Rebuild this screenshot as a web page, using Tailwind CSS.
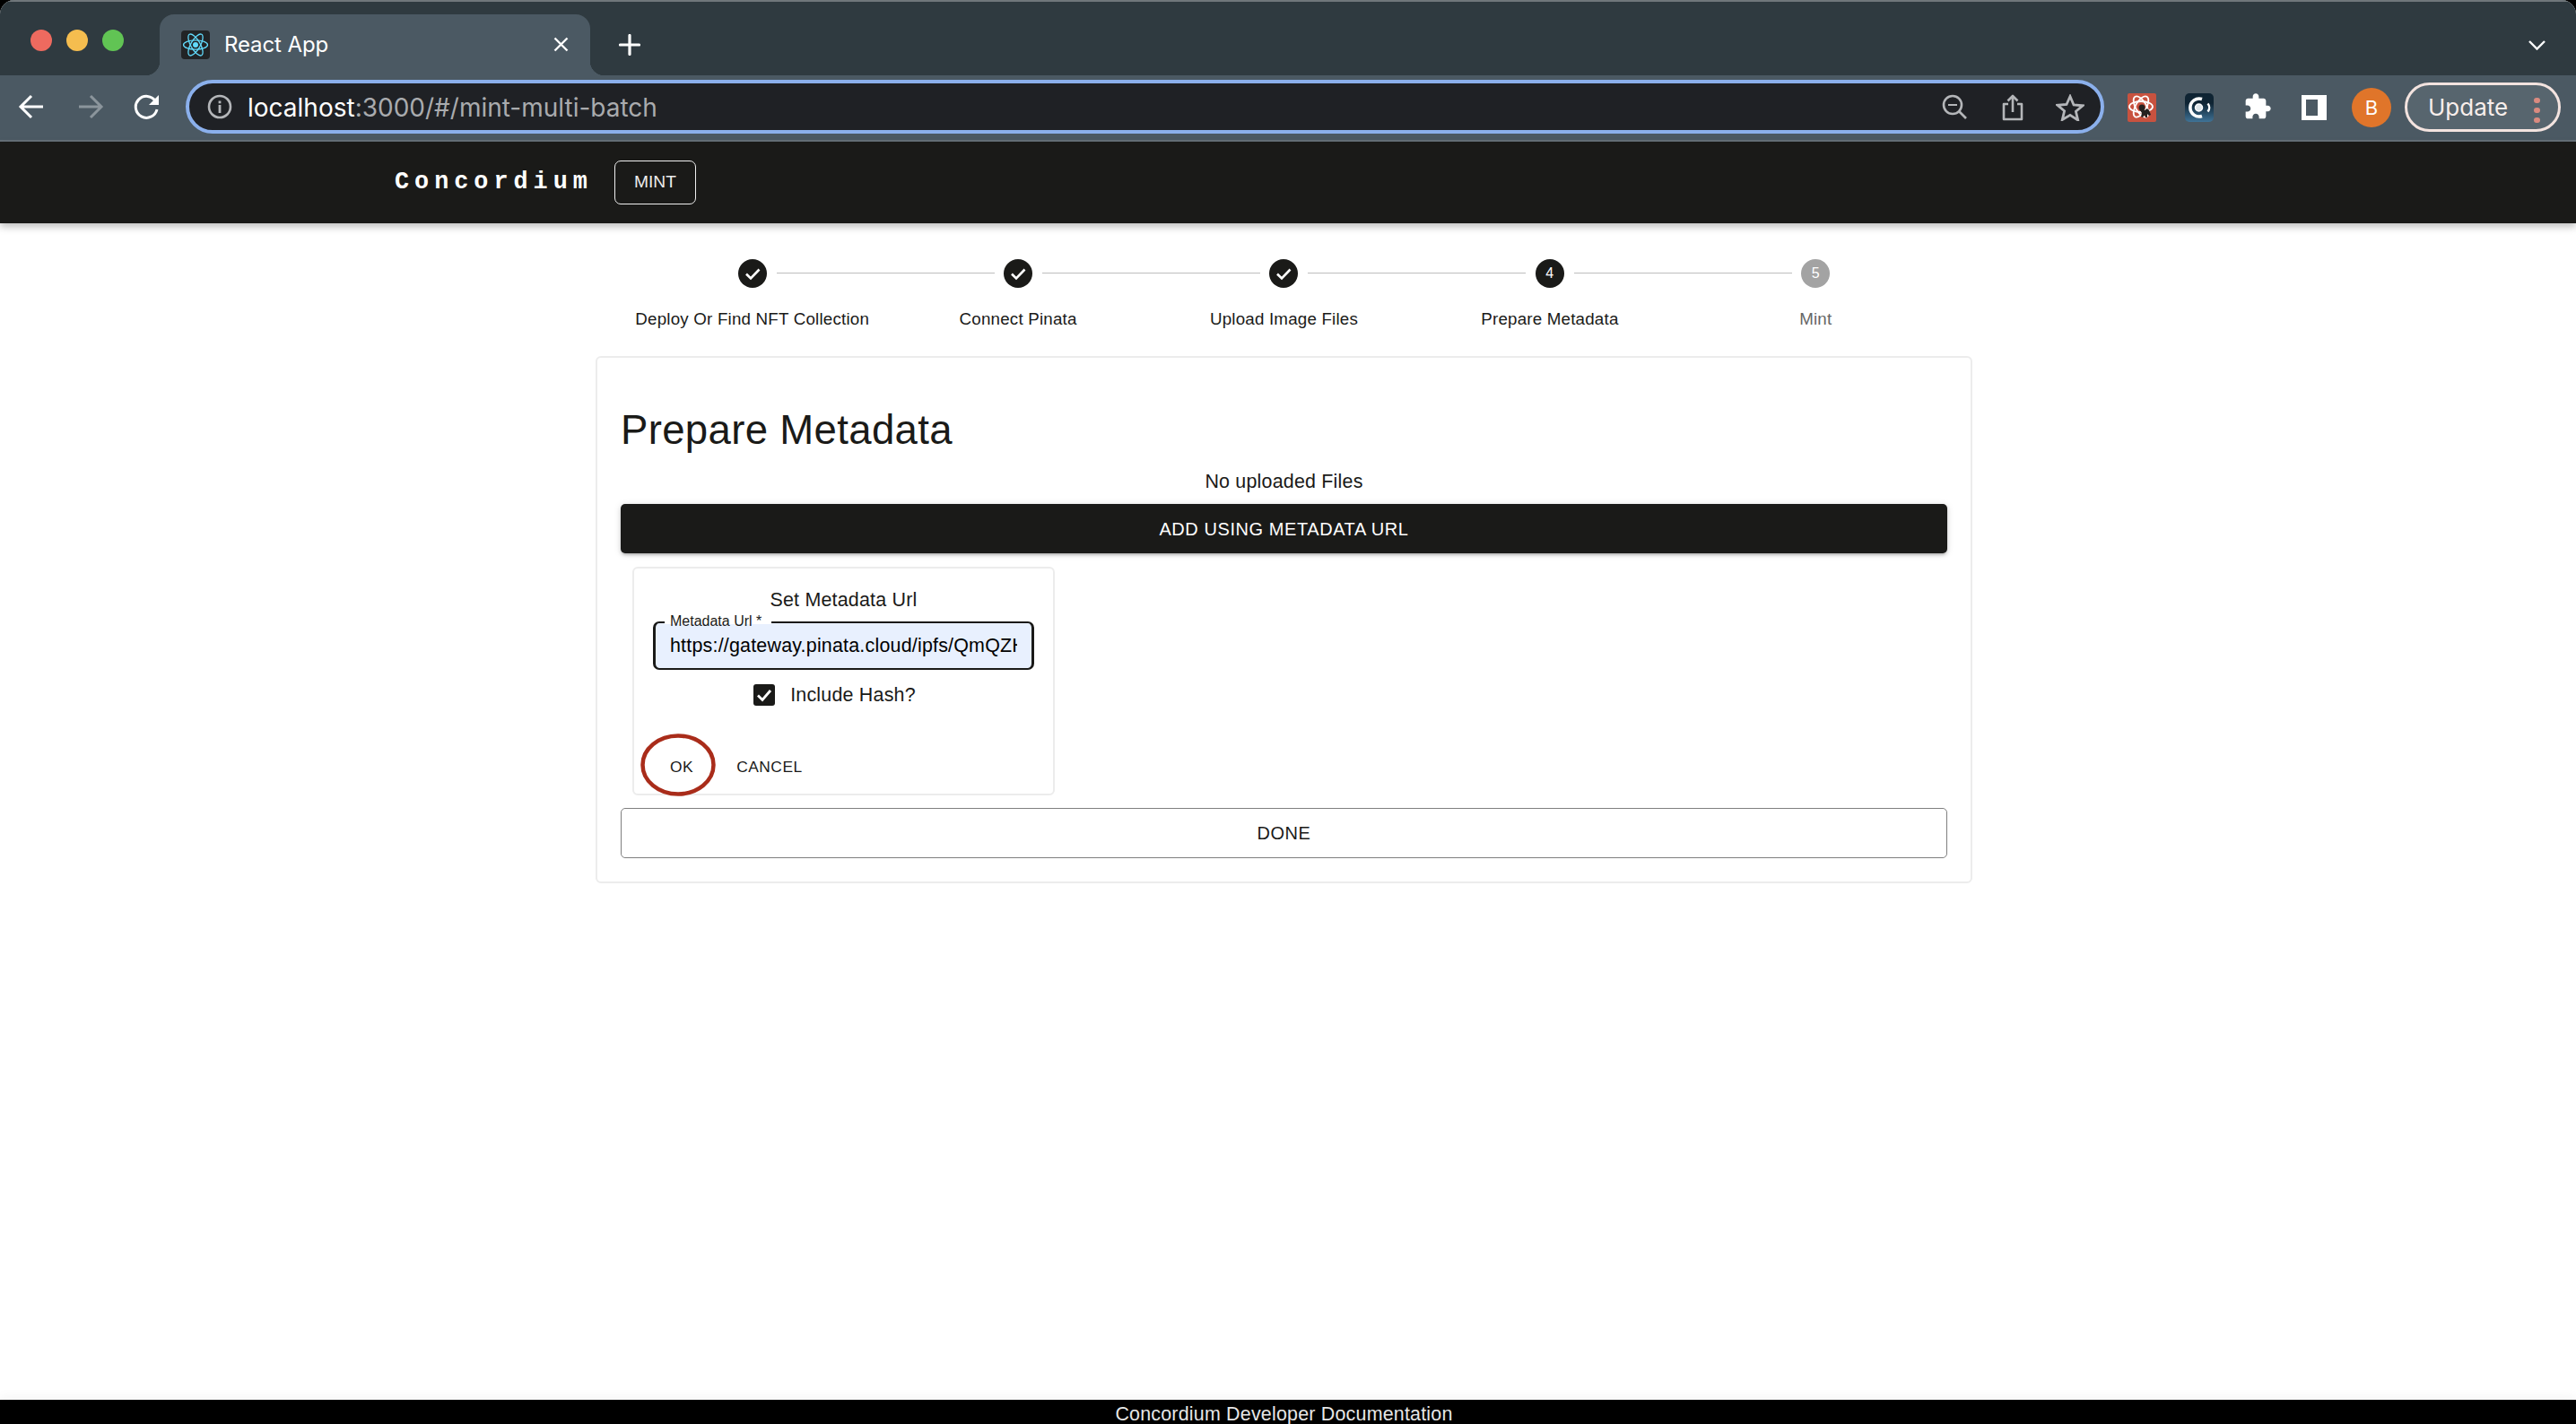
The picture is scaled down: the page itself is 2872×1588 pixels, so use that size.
<!DOCTYPE html>
<html lang="en">
<head>
<meta charset="utf-8">
<title>React App</title>
<script src="https://cdn.jsdelivr.net/npm/@tailwindcss/browser@4"></script>
</head>
<body class="bg-black">
<div class="w-[2872px] h-[1588px] overflow-hidden flex flex-col bg-white rounded-t-[16px] font-['Liberation_Sans',sans-serif] text-[#1a1a18]">

  <!-- tab strip -->
  <div class="h-[84px] shrink-0 bg-[#2f3a40] border-t-2 border-[#70777b] flex items-end relative font-['Inter',sans-serif]">
    <div class="absolute left-[34px] top-[31px] flex gap-[16px]">
      <span class="w-[24px] h-[24px] rounded-full bg-[#ee6a5f]"></span>
      <span class="w-[24px] h-[24px] rounded-full bg-[#f5bd4f]"></span>
      <span class="w-[24px] h-[24px] rounded-full bg-[#61c454]"></span>
    </div>
    <div class="relative ml-[178px] w-[480px] h-[68px] rounded-t-[16px] bg-[#4b5963] flex items-center pl-[24px] text-white">
      <span class="absolute left-[-16px] bottom-0 w-[16px] h-[16px] bg-[radial-gradient(circle_at_0_0,#2f3a40_16px,#4b5963_16.5px)]"></span>
      <span class="absolute right-[-16px] bottom-0 w-[16px] h-[16px] bg-[radial-gradient(circle_at_100%_0,#2f3a40_16px,#4b5963_16.5px)]"></span>
      <svg class="w-[32px] h-[32px] shrink-0" viewBox="0 0 32 32">
        <rect width="32" height="32" rx="4" fill="#222426"/>
        <circle cx="16" cy="16" r="3" fill="#61dafb"/>
        <g fill="none" stroke="#61dafb" stroke-width="1.3">
          <ellipse cx="16" cy="16" rx="13.5" ry="5.2"/>
          <ellipse cx="16" cy="16" rx="13.5" ry="5.2" transform="rotate(60 16 16)"/>
          <ellipse cx="16" cy="16" rx="13.5" ry="5.2" transform="rotate(120 16 16)"/>
        </g>
      </svg>
      <span class="ml-[16px] text-[24px] leading-[32px] tracking-[-0.1px]">React App</span>
      <svg class="absolute left-[439px] top-[25px] w-[17px] h-[17px]" viewBox="0 0 17 17" fill="none" stroke="#fff" stroke-width="2.4"><path d="M1.5 1.5l14 14M15.5 1.5l-14 14"/></svg>
    </div>
    <svg class="absolute left-[690px] top-[36px] w-[24px] h-[24px]" viewBox="0 0 24 24" fill="none" stroke="#fff" stroke-width="3.2" stroke-linecap="round"><path d="M12 1.5v21M1.5 12h21"/></svg>
    <svg class="absolute left-[2819px] top-[43px] w-[19px] h-[11px]" viewBox="0 0 19 11" fill="none" stroke="#fff" stroke-width="2.4"><path d="M1 1l8.5 8.5L18 1"/></svg>
  </div>

  <!-- toolbar -->
  <div class="h-[74px] shrink-0 bg-[#4b5963] border-b-2 border-[#667078] flex items-center relative font-['Inter',sans-serif]">
    <svg class="absolute left-[20px] top-[21px] w-[30px] h-[28px]" viewBox="0 0 30 28" fill="none" stroke="#fff" stroke-width="3"><path d="M28 14H4M15 2L3 14l12 12"/></svg>
    <svg class="absolute left-[86px] top-[21px] w-[30px] h-[28px]" viewBox="0 0 30 28" fill="none" stroke="#8b959c" stroke-width="3"><path d="M2 14h24M15 2l12 12-12 12"/></svg>
    <svg class="absolute left-[149px] top-[21px] w-[30px] h-[28px]" viewBox="0 0 30 28" fill="none"><path d="M24.5 8A12 12 0 1 0 26 17" stroke="#fff" stroke-width="3"/><path d="M28 1v11H17z" fill="#fff"/></svg>

    <div class="ml-[207px] w-[2139px] h-[60px] rounded-full border-4 border-[#8bb0ec] bg-[#1f2125] flex items-center mb-[2px]">
      <svg class="ml-[20px] w-[28px] h-[28px] shrink-0" viewBox="0 0 28 28" fill="none"><circle cx="14" cy="14" r="12" stroke="#b4b6b9" stroke-width="2.6"/><rect x="12.6" y="12" width="2.8" height="9" fill="#b4b6b9"/><rect x="12.6" y="7.5" width="2.8" height="2.8" fill="#b4b6b9"/></svg>
      <span class="ml-[17px] mt-[2px] text-[28px] leading-[36px] text-white">localhost<span class="text-[#a9abae]">:3000/#/mint-multi-batch</span></span>
    </div>
    <svg class="absolute left-[2165px] top-[21px] w-[29px] h-[28px]" viewBox="0 0 29 28" fill="none" stroke="#b4b6b9" stroke-width="2.6"><circle cx="12" cy="12" r="10"/><path d="M7 12h10" stroke-width="2"/><path d="M19 19l8 8"/></svg>
    <svg class="absolute left-[2232px] top-[21px] w-[24px] h-[30px]" viewBox="0 0 24 30" fill="none" stroke="#b4b6b9" stroke-width="2.6" stroke-linejoin="round"><path d="M7 11H2v17h20V11h-5"/><path d="M12 20V2M6.500 7.500L12 2l5.500 5.500"/></svg>
    <svg class="absolute left-[2292px] top-[21px] w-[32px] h-[30px]" viewBox="0 0 32 30" fill="none" stroke="#b4b6b9" stroke-width="2.8"><path d="M16 2.500l4 9.500 10 .8-7.600 6.500 2.300 9.700L16 23.400 7.300 28.500l2.300-9.700L2 12.300l10-.8z"/></svg>

    <svg class="absolute left-[2372px] top-[20px] w-[32px] h-[32px]" viewBox="0 0 32 32">
      <rect width="32" height="32" rx="2" fill="#c8523f"/>
      <g fill="none" stroke="#fff" stroke-width="1.8"><ellipse cx="15" cy="15" rx="13" ry="6"/><ellipse cx="15" cy="15" rx="13" ry="6" transform="rotate(60 15 15)"/><ellipse cx="15" cy="15" rx="13" ry="6" transform="rotate(120 15 15)"/></g>
      <circle cx="16" cy="16" r="3.500" fill="#25211f"/>
      <path d="M14 19h5l3-2 2 2 2 5-2 1-2-2v4h-2l-1-3-2 3-2-1 1-4z" fill="#25211f"/>
    </svg>
    <svg class="absolute left-[2436px] top-[20px] w-[32px] h-[32px]" viewBox="0 0 32 32">
      <defs><linearGradient id="g" x1="0" y1="0" x2="0" y2="1"><stop offset="0.35" stop-color="#0f2433"/><stop offset="1" stop-color="#3f7397"/></linearGradient></defs>
      <rect width="32" height="32" rx="5" fill="url(#g)"/>
      <path d="M19 6.500A10 10 0 1 0 19 25.500" fill="none" stroke="#fff" stroke-width="3.600"/>
      <circle cx="15.500" cy="16" r="4" fill="#dfe6ea" stroke="#fff" stroke-width="1.500"/>
      <path d="M25.500 11.500a7 7 0 0 1 0 9" fill="none" stroke="#fff" stroke-width="2.500"/>
    </svg>
    <svg class="absolute left-[2501px] top-[19px] w-[32px] h-[32px]" viewBox="0 0 24 24" fill="#fff"><path d="M20.5 11H19V7c0-1.100-.9-2-2-2h-4V3.500C13 2.120 11.880 1 10.500 1S8 2.120 8 3.500V5H4c-1.100 0-1.990.9-1.990 2v3.800H3.500c1.490 0 2.700 1.210 2.700 2.700s-1.210 2.700-2.700 2.700H2V20c0 1.100.9 2 2 2h3.800v-1.500c0-1.490 1.210-2.700 2.700-2.700 1.490 0 2.700 1.210 2.700 2.700V22H17c1.100 0 2-.9 2-2v-4h1.500c1.380 0 2.500-1.120 2.500-2.500S21.880 11 20.500 11z"/></svg>
    <div class="absolute left-[2566px] top-[22px] w-[28px] h-[28px] bg-white pl-[5px] py-[5px] pr-[10px]"><div class="w-full h-full bg-[#4b5963]"></div></div>
    <div class="absolute left-[2622px] top-[14px] w-[44px] h-[44px] rounded-full bg-[#e0752a] text-white text-[22px] flex items-center justify-center">B</div>
    <div class="absolute left-[2681px] top-[8px] w-[174px] h-[55px] rounded-full border-[3px] border-[#f3e3df] bg-[#57656e] flex items-center pl-[23px]">
      <span class="text-[26px] leading-[32px] text-[#f8eeeb]">Update</span>
      <span class="absolute left-[141px] top-[14px] flex flex-col gap-[5px]">
        <i class="block w-[7px] h-[6px] rounded-full bg-[#d98a80]"></i>
        <i class="block w-[7px] h-[6px] rounded-full bg-[#d98a80]"></i>
        <i class="block w-[7px] h-[6px] rounded-full bg-[#d98a80]"></i>
      </span>
    </div>
  </div>

  <!-- app bar -->
  <header class="h-[91px] shrink-0 bg-[#1a1a18] flex items-center pl-[440px] shadow-[0_4px_8px_rgba(0,0,0,0.25)] relative">
    <span class="w-[225px] font-['Liberation_Mono',monospace] font-bold text-[26.8px] tracking-[6px] text-white leading-none">Concordium</span>
    <span class="ml-[20px] w-[91px] h-[49px] rounded-[7px] border border-[#f0f0f0] flex items-center justify-center text-[#ececec] text-[19.2px]">MINT</span>
  </header>

  <!-- main -->
  <main class="flex-1 flex flex-col items-center pr-[9px] pt-[40px]">
    <div class="grid grid-cols-5 w-[1482px] text-[18.76px] tracking-[0.2px]">
      <div class="relative flex flex-col items-center">
        <svg class="w-[32px] h-[32px]" viewBox="0 0 32 32"><circle cx="16" cy="16" r="16" fill="#1a1a18"/><path d="M9 16.500l5 5 9.500-10" fill="none" stroke="#fff" stroke-width="2.600"/></svg>
        <span class="mt-[20px] leading-[30px]">Deploy Or Find NFT Collection</span>
        <i class="absolute left-[175px] top-[15px] w-[243px] h-px bg-[#bdbdbd]"></i>
      </div>
      <div class="relative flex flex-col items-center">
        <svg class="w-[32px] h-[32px]" viewBox="0 0 32 32"><circle cx="16" cy="16" r="16" fill="#1a1a18"/><path d="M9 16.500l5 5 9.500-10" fill="none" stroke="#fff" stroke-width="2.600"/></svg>
        <span class="mt-[20px] leading-[30px]">Connect Pinata</span>
        <i class="absolute left-[175px] top-[15px] w-[243px] h-px bg-[#bdbdbd]"></i>
      </div>
      <div class="relative flex flex-col items-center">
        <svg class="w-[32px] h-[32px]" viewBox="0 0 32 32"><circle cx="16" cy="16" r="16" fill="#1a1a18"/><path d="M9 16.500l5 5 9.500-10" fill="none" stroke="#fff" stroke-width="2.600"/></svg>
        <span class="mt-[20px] leading-[30px]">Upload Image Files</span>
        <i class="absolute left-[175px] top-[15px] w-[243px] h-px bg-[#bdbdbd]"></i>
      </div>
      <div class="relative flex flex-col items-center">
        <span class="w-[32px] h-[32px] rounded-full bg-[#1a1a18] text-white text-[16px] flex items-center justify-center">4</span>
        <span class="mt-[20px] leading-[30px]">Prepare Metadata</span>
        <i class="absolute left-[175px] top-[15px] w-[243px] h-px bg-[#bdbdbd]"></i>
      </div>
      <div class="flex flex-col items-center">
        <span class="w-[32px] h-[32px] rounded-full bg-[#a3a3a3] text-white text-[16px] flex items-center justify-center">5</span>
        <span class="mt-[20px] leading-[30px] text-[#666]">Mint</span>
      </div>
    </div>

    <section class="mt-[26px] w-[1535px] h-[588px] border-2 border-[#ececec] rounded-[6px] px-[26px] flex flex-col">
      <h1 class="mt-[53px] text-[45.56px] leading-[56px] font-normal tracking-[0.33px]">Prepare Metadata</h1>
      <p class="mt-[13px] text-[21.44px] leading-[32px] tracking-[0.2px] text-center">No uploaded Files</p>
      <div class="mt-[9px] h-[55px] shrink-0 rounded-[5px] bg-[#1a1a18] text-white text-[20px] tracking-[0.57px] flex items-center justify-center shadow-[0_3px_3px_-2px_rgba(0,0,0,0.2),0_2px_4px_rgba(0,0,0,0.14),0_1px_8px_rgba(0,0,0,0.12)]">ADD USING METADATA URL</div>

      <div class="mt-[15px] ml-[13px] w-[471px] h-[255px] shrink-0 border-2 border-[#ececec] rounded-[6px] flex flex-col items-center pt-[20px]">
        <h2 class="text-[21.44px] leading-[30px] font-normal tracking-[0.2px]">Set Metadata Url</h2>
        <div class="relative mt-[9px] w-[425px] h-[54px] shrink-0 border-x-[3px] border-y-2 border-[#1a1a18] rounded-[7px] bg-[#e8f0fe] px-[16px] flex items-center">
          <span class="absolute left-[10px] top-[-2px] w-[119px] h-[3px] bg-white"></span>
          <span class="absolute left-[16px] top-[-12px] text-[16px] leading-[20px] whitespace-nowrap">Metadata Url *</span>
          <span class="block w-full overflow-hidden whitespace-nowrap text-[21.44px] leading-[28px] tracking-[0.2px] text-black">https://gateway.pinata.cloud/ipfs/QmQZH</span>
        </div>
        <div class="mt-[16px] mr-[20px] flex items-center h-[24px]">
          <svg class="w-[24px] h-[24px]" viewBox="0 0 24 24"><rect width="24" height="24" rx="3" fill="#1a1a18"/><path d="M5 12.500l5 5 9-10.500" fill="none" stroke="#fff" stroke-width="2.800"/></svg>
          <span class="ml-[17px] text-[21.44px] leading-[28px] tracking-[0.2px]">Include Hash?</span>
        </div>
        <div class="mt-[50px] self-stretch flex pl-[20px] gap-[8px] text-[17.4px] tracking-[0.5px]">
          <span class="relative h-[36px] px-[20px] flex items-center">OK
            <svg class="absolute left-[-13px] top-[-19px] w-[84px] h-[70px]" viewBox="0 0 84 70" fill="none"><ellipse cx="42" cy="35" rx="39.500" ry="32.500" stroke="#a92c1a" stroke-width="4.500"/></svg>
          </span>
          <span class="h-[36px] px-[20px] flex items-center">CANCEL</span>
        </div>
      </div>

      <div class="mt-[14px] h-[56px] shrink-0 rounded-[5px] border border-[#7f7f7f] text-[20px] tracking-[0.57px] flex items-center justify-center">DONE</div>
    </section>
  </main>

  <footer class="h-[27px] shrink-0 bg-black overflow-hidden text-center pr-[9px] text-[21.44px] leading-[32px] tracking-[0.2px] text-[#e6e6e6] shadow-[0_-4px_12px_rgba(0,0,0,0.04)]">Concordium Developer Documentation</footer>
</div>
</body>
</html>
